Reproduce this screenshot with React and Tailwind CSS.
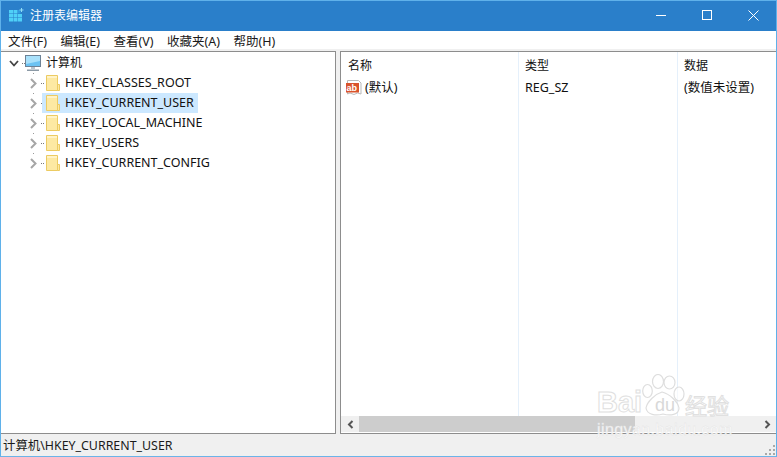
const Folder = () => (
  <svg width="18" height="18" viewBox="0 0 18 18" className="shrink-0">
    <path d="M1.5 1.5H12.5V16.5H1.5Z" fill="#fde9a3" stroke="#eccb62" />
    <path d="M12.5 10.5H14.5V16.5H12.5Z" fill="#fde9a3" stroke="#eccb62" />
    <path d="M2 2H12V4H2Z" fill="#fff3c8" />
  </svg>
);

const Chevron = () => (
  <svg width="9" height="11" viewBox="0 0 9 11" className="shrink-0">
    <path d="M2 1L6.5 5.5L2 10" fill="none" stroke="#a6a6a6" strokeWidth="2" />
  </svg>
);

const Dots = ({ className = "" }) => (
  <span className={`block w-[3px] h-px shrink-0 border-t border-dotted border-[#7a7a7a] ${className}`} />
);

const Row = ({ label, selected }) => (
  <div className="relative flex items-center h-5 pl-[28px]">
    <span className="absolute left-[32px] top-0 w-px h-px bg-[#9a9a9a]" />
    <Chevron />
    <Dots className="ml-[3px] -mr-[2px]" />
    <div className={`flex items-center h-5 pl-[3px] pr-[4px] ${selected ? "bg-[#cce8ff]" : ""}`}>
      <Folder />
      <span className="ml-[2px] whitespace-nowrap">{label}</span>
    </div>
  </div>
);

const Menu = ({ children }) => <span className="whitespace-nowrap">{children}</span>;

const Col = ({ children, className = "" }) => (
  <div className={`h-full border-r border-[#e5f0fb] ${className}`}>{children}</div>
);

const stroke = "[-webkit-text-stroke:1px_#e0e0e0]";

export default function App() {
  return (
    <div className="relative w-[777px] h-[457px] flex flex-col overflow-hidden bg-[#f0f0f0] border border-[#5fb1ea] border-b-[#6cb4e8] text-[12.5px] leading-none text-[#111] font-['Noto_Sans','Noto_Sans_CJK_SC',sans-serif]">
      <div className="h-[30px] shrink-0 bg-[#2a7fca] flex items-center pl-[7px] text-white">
        <svg width="16" height="16" viewBox="0 0 16 16" className="shrink-0">
          <path d="M1 2h4v3.5H1zM5.5 2h4v3.5h-4zM1 6h4v3.5H1zM5.5 6h4v3.5h-4zM10 6h4v3.5h-4zM1 10h4v3.5H1zM5.5 10h4v3.5h-4zM10 10h4v3.5h-4z" fill="#4fd0f7" />
          <path d="M10 2h2.5v3.5H10z" fill="#2f9be0" />
          <path d="M13 0h1v4h-1zM11.5 1.5h4v1h-4z" fill="#8fdcf5" />
        </svg>
        <span className="ml-[6px] text-[12px]">注册表编辑器</span>
        <div className="ml-auto flex self-start">
          <div className="w-[46px] h-[28px] flex items-center justify-center">
            <span className="w-[10px] h-px bg-white" />
          </div>
          <div className="w-[46px] h-[28px] flex items-center justify-center">
            <span className="w-[10px] h-[10px] border border-white" />
          </div>
          <div className="w-[46px] h-[28px] flex items-center justify-center">
            <svg width="11" height="11" viewBox="0 0 11 11">
              <path d="M0.5 0.5L10.5 10.5M10.5 0.5L0.5 10.5" stroke="#fff" strokeWidth="1" />
            </svg>
          </div>
        </div>
      </div>
      <div className="h-[18px] shrink-0 bg-white flex items-center gap-[13.5px] pl-[7px] pt-[4px] text-[12.5px] text-[#1a1a1a]">
        <Menu>文件(F)</Menu>
        <Menu>编辑(E)</Menu>
        <Menu>查看(V)</Menu>
        <Menu>收藏夹(A)</Menu>
        <Menu>帮助(H)</Menu>
      </div>
      <div className="h-[2px] shrink-0 bg-[#f0f0f0]" />
      <div className="h-[383px] shrink-0 flex justify-between bg-[#f0f0f0]">
        <div className="w-[335px] bg-white border-t border-r border-b border-[#8d8d8d] pt-[1px]">
          <div className="flex items-center h-5 pl-[8px]">
            <svg width="10" height="9" viewBox="0 0 10 9" className="shrink-0">
              <path d="M1 2L5 6.5L9 2" fill="none" stroke="#444" strokeWidth="1.8" />
            </svg>
            <Dots className="ml-[3px] -mr-[1px]" />
            <svg width="18" height="18" viewBox="0 0 18 18" className="shrink-0">
              <rect x="1.5" y="1.5" width="15" height="11" fill="#6cc3f3" stroke="#6d8296" />
              <path d="M2 2H16V7L2 10Z" fill="#a9e1fb" />
              <path d="M7 13h4v2H7z" fill="#b8c4ce" />
              <path d="M3 15.5h12v1.5H3z" fill="#8c9aa6" />
            </svg>
            <span className="ml-[4px] text-[12px]">计算机</span>
          </div>
          <Row label="HKEY_CLASSES_ROOT" />
          <Row label="HKEY_CURRENT_USER" selected />
          <Row label="HKEY_LOCAL_MACHINE" />
          <Row label="HKEY_USERS" />
          <Row label="HKEY_CURRENT_CONFIG" />
        </div>
        <div className="w-[436px] flex flex-col bg-white border-t border-l border-b border-[#8d8d8d]">
          <div className="flex-1 min-h-0 flex">
            <Col className="w-[178px] shrink-0 pl-[7px]">
              <div className="h-[27px] flex items-center text-[12px]">名称</div>
              <div className="flex items-center h-[18px] -ml-[2px]">
                <svg width="16" height="16" viewBox="0 0 16 16" className="shrink-0">
                  <path d="M1.5 0.5H12.5L15 3V14L11.5 13L8 14.5L4 13L1.5 14Z" fill="#fff" stroke="#b9b9b9" />
                  <rect x="0" y="3" width="13" height="9.5" fill="#d9532c" />
                  <text x="0.5" y="10.5" fontSize="9" fontWeight="700" fill="#fff" fontFamily="'Liberation Sans',sans-serif">ab</text>
                </svg>
                <span className="ml-[3px]">(默认)</span>
              </div>
            </Col>
            <Col className="w-[159px] shrink-0 pl-[6px]">
              <div className="h-[27px] flex items-center text-[12px]">类型</div>
              <div className="flex items-center h-[18px]">REG_SZ</div>
            </Col>
            <div className="pl-[6px] flex-1">
              <div className="h-[27px] flex items-center text-[12px]">数据</div>
              <div className="flex items-center h-[18px] whitespace-nowrap">(数值未设置)</div>
            </div>
          </div>
          <div className="h-[16px] shrink-0 flex items-center bg-[#f0f0f0] mb-px">
            <div className="w-[18px] flex justify-center">
              <svg width="7" height="9" viewBox="0 0 7 9"><path d="M5.5 1L2 4.5L5.5 8" fill="none" stroke="#555" strokeWidth="2" /></svg>
            </div>
            <div className="w-[276px] h-full bg-[#cdcdcd]" />
            <div className="ml-auto w-[17px] flex justify-center">
              <svg width="7" height="9" viewBox="0 0 7 9"><path d="M1.5 1L5 4.5L1.5 8" fill="none" stroke="#555" strokeWidth="2" /></svg>
            </div>
          </div>
        </div>
      </div>
      <div className="relative flex-1 flex items-center pl-[2px] pt-[3px] bg-[#f0f0f0] text-[12.4px] text-[#1a1a1a]">
        计算机\HKEY_CURRENT_USER
        <svg width="12" height="12" viewBox="0 0 12 12" className="absolute right-0 bottom-0" fill="#a9a9a9">
          <path d="M9 1h2v2H9zM5 5h2v2H5zM9 5h2v2H9zM1 9h2v2H1zM5 9h2v2H5zM9 9h2v2H9z" />
        </svg>
      </div>
      <div className="absolute left-[596px] top-[373px] w-[140px] h-[66px] pointer-events-none font-['Liberation_Sans',sans-serif]">
        <svg width="43" height="43" viewBox="0 0 43 43" className="absolute left-[45px] top-0" fill="#ffffff99" stroke="#dedede" strokeWidth="1.2">
          <ellipse cx="5.5" cy="17" rx="4.8" ry="6.5" />
          <ellipse cx="16" cy="7.5" rx="5.5" ry="7" />
          <ellipse cx="27.5" cy="8.5" rx="5.5" ry="6.5" />
          <ellipse cx="37" cy="20" rx="5" ry="7" />
          <path d="M20 18C28 20 36 28 37 34C37 41 28 42 21 40C14 42 5 41 4 34C5 28 13 20 20 18Z" />
        </svg>
        <span className={`absolute left-0 top-[14px] text-[29px] font-bold text-white/70 ${stroke}`}>Bai</span>
        <span className="absolute left-[58px] top-[22px] text-[18px] text-[#d8d8d8]">du</span>
        <span className={`absolute left-[88px] top-[19px] text-[22px] text-white/70 font-['Noto_Sans_CJK_SC',sans-serif] ${stroke}`}>经验</span>
        <span className="absolute left-0 top-[48px] text-[16px] tracking-[0.4px] text-white/90 [-webkit-text-stroke:0.4px_#e2e2e2]">jingyan.baidu.com</span>
      </div>
    </div>
  );
}
